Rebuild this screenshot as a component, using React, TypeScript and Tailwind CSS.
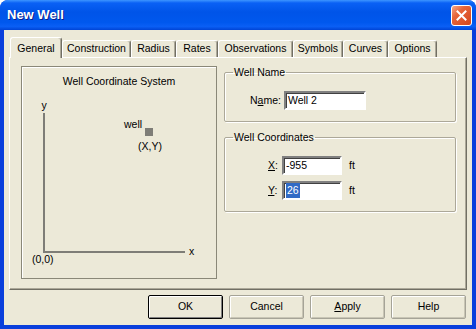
import React from "react";

const tabs: Array<{ label: string; w: string; active?: boolean }> = [
  { label: "General", w: "w-[52px]", active: true },
  { label: "Construction", w: "w-[69px]" },
  { label: "Radius", w: "w-[45px]" },
  { label: "Rates", w: "w-[42px]" },
  { label: "Observations", w: "w-[75px]" },
  { label: "Symbols", w: "w-[50px]" },
  { label: "Curves", w: "w-[45px]" },
  { label: "Options", w: "w-[49px]" },
];

function CloseButton() {
  return (
    <div className="flex h-[21px] w-[21px] items-center justify-center rounded-[3px] border border-white bg-[linear-gradient(135deg,#f4a88a_0%,#e6653a_35%,#d4461c_100%)]">
      <svg width="11" height="11" viewBox="0 0 11 11">
        <path d="M1.5 1.5 L9.5 9.5 M9.5 1.5 L1.5 9.5" stroke="#fff" strokeWidth="2" strokeLinecap="square" />
      </svg>
    </div>
  );
}

function Field({ value, selected, w }: { value: string; selected?: boolean; w: string }) {
  return (
    <div
      className={`${w} flex h-[19px] items-center border-2 border-t-[#808080] border-l-[#808080] border-b-white border-r-white bg-white pl-[2px] shadow-[inset_1px_1px_0_#404040] text-black`}
    >
      {selected ? <span className="bg-[#316ac5] px-[1px] text-white">{value}</span> : value}
    </div>
  );
}

function Group({ title, className, children }: { title: string; className: string; children: React.ReactNode }) {
  return (
    <fieldset className={`${className} rounded-[2px] border border-[#aca899] px-0 shadow-[inset_1px_1px_0_#fff,1px_1px_0_#fff]`}>
      <legend className="ml-[8px] px-[1px] leading-[13px]">{title}</legend>
      {children}
    </fieldset>
  );
}

function Button({ children, isDefault }: { children: React.ReactNode; isDefault?: boolean }) {
  return (
    <div
      className={`flex h-[24px] w-[75px] items-center justify-center rounded-[2px] border bg-[#ece9d8] ${
        isDefault
          ? "border-black shadow-[inset_1px_1px_0_#fff,inset_-1px_-1px_0_#808080]"
          : "border-[#a5a397] shadow-[inset_1px_1px_0_#fff,inset_-1px_-1px_0_#c8c5b5]"
      }`}
    >
      {children}
    </div>
  );
}

function CoordinateChart() {
  return (
    <svg width="194" height="190" className="block font-['Liberation_Sans',Arial,sans-serif]">
      <line x1="22" y1="25" x2="22" y2="165" stroke="#7e7d77" strokeWidth="2" />
      <line x1="21" y1="164" x2="163" y2="164" stroke="#7e7d77" strokeWidth="2" />
      <g fontSize="10.5" fill="#000">
        <text x="22" y="21" textAnchor="middle">y</text>
        <text x="167" y="167">x</text>
        <text x="10" y="175">(0,0)</text>
        <text x="102" y="40">well</text>
        <text x="116" y="62">(X,Y)</text>
      </g>
      <rect x="123" y="40" width="8" height="8" fill="#7e7d77" />
    </svg>
  );
}

export default function App() {
  return (
    <div className="flex h-[329px] w-[476px] flex-col overflow-hidden rounded-t-[8px] bg-[#0a3fdc] font-['Liberation_Sans',Arial,sans-serif] text-[10.5px] text-black">
      <div className="flex h-[30px] shrink-0 items-center justify-between bg-[linear-gradient(180deg,#3d95ff_0%,#0a61f5_10%,#0054e8_40%,#0058ee_75%,#0a5ff5_88%,#0044d6_100%)] pl-[7px] pr-[4px]">
        <span className="text-[13px] font-bold text-white [text-shadow:1px_1px_0_#0a1e8c]">New Well</span>
        <CloseButton />
      </div>

      <div className="mx-[4px] mb-[4px] flex flex-1 flex-col bg-[#ece9d8] px-[5px] pt-[7px]">
        <div className="flex h-[20px] items-end pl-[1px]">
          {tabs.map((t) =>
            t.active ? (
              <div
                key={t.label}
                className={`${t.w} relative z-10 mb-[-1px] flex h-[21px] items-start justify-center rounded-t-[3px] border-l border-t border-r border-l-white border-t-white border-r-[#716f64] bg-[#ece9d8] pt-[3px] shadow-[inset_-1px_0_0_#aca899]`}
              >
                {t.label}
              </div>
            ) : (
              <div
                key={t.label}
                className={`${t.w} flex h-[17px] items-center justify-center rounded-t-[3px] border-l border-t border-r border-l-white border-t-white border-r-[#716f64] shadow-[inset_-1px_0_0_#aca899]`}
              >
                {t.label}
              </div>
            )
          )}
        </div>

        <div className="flex h-[233px] gap-[7px] border border-t-white border-l-white border-r-[#716f64] border-b-[#716f64] pl-[11px] pt-[8px] shadow-[inset_-1px_-1px_0_#aca899]">
          <div className="flex h-[213px] w-[196px] flex-col border border-[#8a8878] shadow-[inset_1px_1px_0_#fff]">
            <div className="pt-[8px] text-center leading-[13px]">Well Coordinate System</div>
            <CoordinateChart />
          </div>

          <div className="flex w-[232px] flex-col">
            <Group title="Well Name" className="h-[56px]">
              <div className="flex items-center pl-[25px] pt-[12px]">
                <span className="mr-[3px]">
                  N<span className="underline">a</span>me:
                </span>
                <Field value="Well 2" w="w-[82px]" />
              </div>
            </Group>

            <Group title="Well Coordinates" className="mt-[9px] h-[81px]">
              <div className="flex flex-col gap-[6px] pl-[43px] pt-[12px]">
                <div className="flex items-center">
                  <span className="mr-[3px] w-[11px]">
                    <span className="underline">X</span>:
                  </span>
                  <Field value="-955" w="w-[60px]" />
                  <span className="ml-[7px]">ft</span>
                </div>
                <div className="flex items-center">
                  <span className="mr-[3px] w-[11px]">
                    <span className="underline">Y</span>:
                  </span>
                  <Field value="26" selected w="w-[60px]" />
                  <span className="ml-[7px]">ft</span>
                </div>
              </div>
            </Group>
          </div>
        </div>

        <div className="mt-[5px] flex justify-end gap-[6px] pr-[1px]">
          <Button isDefault>OK</Button>
          <Button>Cancel</Button>
          <Button>
            <span>
              <span className="underline">A</span>pply
            </span>
          </Button>
          <Button>Help</Button>
        </div>
      </div>
    </div>
  );
}
